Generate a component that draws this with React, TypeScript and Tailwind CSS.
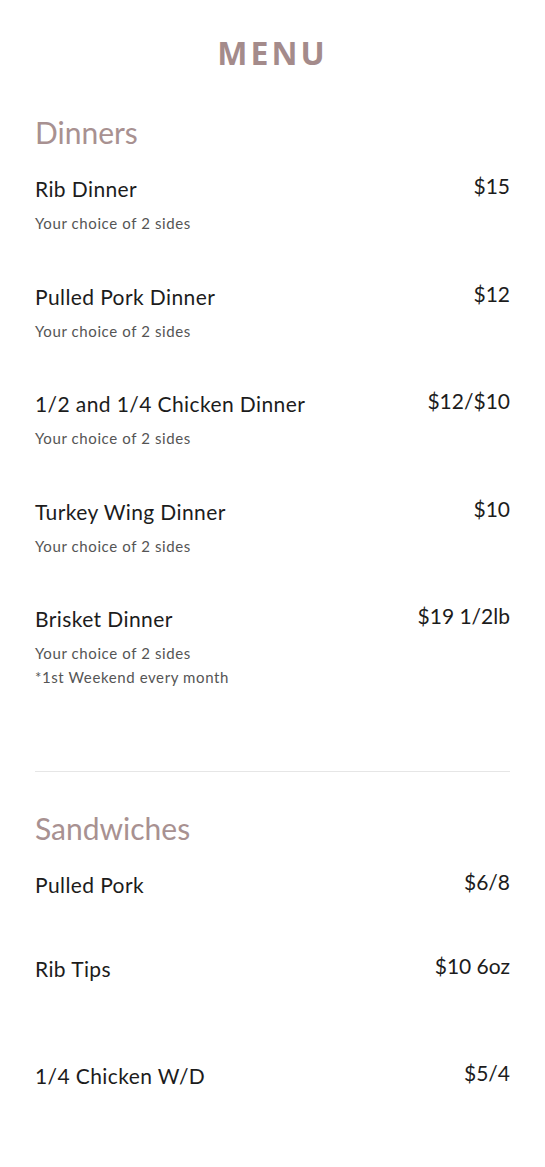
const dinners = [
  { name: 'Rib Dinner', price: '$15', notes: ['Your choice of 2 sides'] },
  { name: 'Pulled Pork Dinner', price: '$12', notes: ['Your choice of 2 sides'] },
  { name: '1/2 and 1/4 Chicken Dinner', price: '$12/$10', notes: ['Your choice of 2 sides'] },
  { name: 'Turkey Wing Dinner', price: '$10', notes: ['Your choice of 2 sides'] },
  { name: 'Brisket Dinner', price: '$19 1/2lb', notes: ['Your choice of 2 sides', '*1st Weekend every month'] },
];

const sandwiches = [
  { name: 'Pulled Pork', price: '$6/8', gap: 'h-[84px]' },
  { name: 'Rib Tips', price: '$10 6oz', gap: 'h-[107px]' },
  { name: '1/4 Chicken W/D', price: '$5/4', gap: 'h-[60px]' },
];

function ItemRow({ name, price }: { name: string; price: string }) {
  return (
    <div className="flex justify-between items-start h-[28px]">
      <span className="text-[21px] leading-[28px] pt-[3px] text-[#1c1c1c] tracking-[0.4px]">{name}</span>
      <span className="text-[21px] leading-[28px] text-[#1c1c1c]">{price}</span>
    </div>
  );
}

export default function App() {
  return (
    <div className="min-h-screen w-full bg-white px-[35px] font-['Lato',sans-serif]">
      <h1 className="pt-[34px] h-[114px] text-center text-[32px] leading-[38px] font-bold tracking-[3px] text-[#a48b8b] font-['Noto_Sans',sans-serif]">
        MENU
      </h1>

      <h2 className="text-[30px] leading-[36px] text-[#a89191] h-[58px]">Dinners</h2>

      <div className="flex flex-col">
        {dinners.map((d) => (
          <div key={d.name} className="h-[107.5px]">
            <ItemRow name={d.name} price={d.price} />
            <div className="mt-[13px] flex flex-col gap-[4px]">
              {d.notes.map((n) => (
                <p key={n} className="text-[15px] leading-[20px] text-[#555] tracking-[0.6px]">{n}</p>
              ))}
            </div>
          </div>
        ))}
      </div>

      <div className="h-[61px]" />
      <div className="border-t border-[#e6e6e6]" />

      <h2 className="mt-[38px] text-[30px] leading-[36px] text-[#a89191] h-[40px]">Sandwiches</h2>

      <div className="mt-[18px] flex flex-col">
        {sandwiches.map((s) => (
          <div key={s.name} className={s.gap}>
            <ItemRow name={s.name} price={s.price} />
          </div>
        ))}
      </div>
    </div>
  );
}
